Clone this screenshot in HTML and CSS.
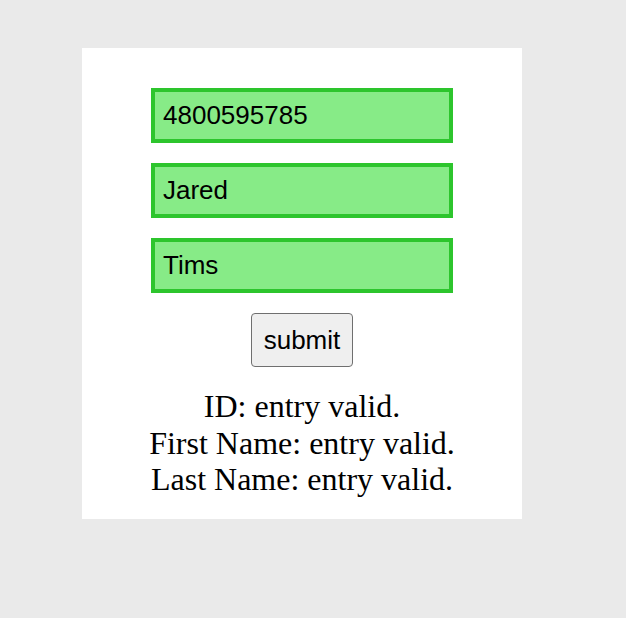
FILE: index.html
```html
<!DOCTYPE html>
<html>
<head>
<meta charset="utf-8">
<link rel="stylesheet" href="styles.css">
</head>
<body>
<div class="card">
  <form class="form">
    <input class="field" type="text" value="4800595785">
    <input class="field" type="text" value="Jared">
    <input class="field" type="text" value="Tims">
    <button class="submit" type="button">submit</button>
  </form>
  <div class="messages">
    <div>ID: entry valid.</div>
    <div>First Name: entry valid.</div>
    <div>Last Name: entry valid.</div>
  </div>
</div>
</body>
</html>
```
FILE: styles.css
```css
html, body {
  margin: 0;
  padding: 0;
  background: #eaeaea;
}
body {
  padding: 48px 0 0 82px;
}
.card {
  width: 440px;
  height: 471px;
  box-sizing: border-box;
  background: #ffffff;
  padding-top: 40px;
  display: flex;
  flex-direction: column;
  align-items: center;
}
.form {
  display: flex;
  flex-direction: column;
  align-items: center;
  gap: 20px;
  margin: 0;
}
.field {
  width: 302px;
  height: 55px;
  box-sizing: border-box;
  border: 4px solid #2dc52d;
  background: #87eb87;
  padding: 0 8px;
  margin: 0;
  font-family: "Liberation Sans", Arial, sans-serif;
  font-size: 26px;
  color: #000;
  outline: none;
  border-radius: 0;
}
.submit {
  height: 54px;
  width: 102px;
  box-sizing: border-box;
  padding: 0;
  margin: 0;
  border: 1px solid #6f6f6f;
  border-radius: 4px;
  background: #efefef;
  font-family: "Liberation Sans", Arial, sans-serif;
  font-size: 26px;
  color: #000;
}
.messages {
  margin-top: 21px;
  font-family: "Liberation Serif", "Times New Roman", serif;
  font-size: 32px;
  line-height: 36.5px;
  text-align: center;
  color: #000;
}
```
